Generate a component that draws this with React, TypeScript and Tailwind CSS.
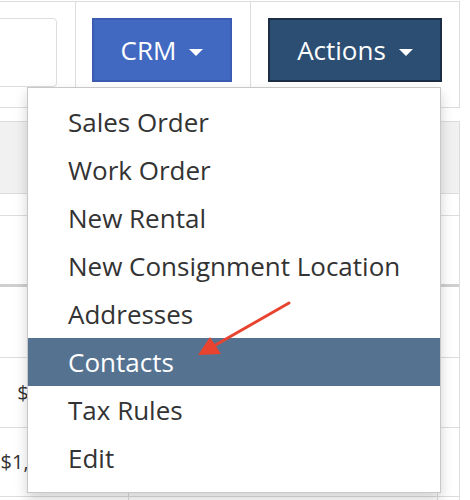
import React from 'react'

const menuItems = [
  'Sales Order',
  'Work Order',
  'New Rental',
  'New Consignment Location',
  'Addresses',
  'Contacts',
  'Tax Rules',
  'Edit',
]

function Caret() {
  return <span className="ml-[13px] mt-[4px] h-0 w-0 border-x-[7px] border-t-[7px] border-x-transparent border-t-white" />
}

function Row({ h, amount, thick }: { h: string; amount?: string; thick?: boolean }) {
  return (
    <div className={`flex ${h} ${thick ? 'border-b-[3px] border-[#cfcfcf]' : 'border-b border-[#dddddd]'}`}>
      <div className="w-[129px] border-r border-[#dddddd] pr-[37px] flex items-center justify-end text-[20px] text-[#333]">
        {amount}
      </div>
      <div className="w-[309px] border-r border-[#dddddd]" />
      <div className="flex-1" />
    </div>
  )
}

export default function App() {
  return (
    <div className="relative w-[470px] h-[500px] overflow-hidden bg-white font-['Open_Sans',sans-serif]">
      {/* toolbar */}
      <div className="mt-px w-[460px] h-[107px] flex border-y border-r border-[#dddddd]">
        <div className="w-[76px] border-r border-[#dddddd] pt-[16px]">
          <div className="-ml-[20px] w-[77px] h-[69px] rounded border border-[#dddddd] bg-white" />
        </div>
        <div className="w-[175px] border-r border-[#dddddd] pt-[16px] pl-[16px]">
          <button className="w-[140px] h-[64px] bg-[#4169c1] border-2 border-[#3a5db3] text-white text-[26px] flex items-center justify-center">
            CRM
            <Caret />
          </button>
        </div>
        <div className="flex-1 pt-[16px] pl-[17px]">
          <button className="w-[174px] h-[64px] bg-[#2c4e72] border-2 border-[#1b2e45] text-white text-[26px] flex items-center justify-center">
            Actions
            <Caret />
          </button>
        </div>
      </div>

      {/* table behind */}
      <div className="mt-[13px] w-[460px] border-t border-r border-[#dddddd]">
        <div className="h-[72px] bg-[#f1f1f1] border-b border-[#dddddd]" />
        <Row h="h-[22px]" />
        <Row h="h-[71px]" thick />
        <Row h="h-[71px]" />
        <Row h="h-[70px]" amount="$234.56" />
        <Row h="h-[69px]" amount="$1,234.56" />
        <Row h="h-[40px]" />
      </div>

      {/* dropdown */}
      <ul className="absolute left-[27px] top-[87px] w-[414px] py-[10px] bg-white border border-[#c8c8c8] shadow-[0_6px_12px_rgba(0,0,0,0.175)]">
        {menuItems.map((item) => (
          <li
            key={item}
            className={`h-[48px] pl-[40px] flex items-center text-[26px] ${
              item === 'Contacts' ? 'bg-[#557391] text-white' : 'text-[#333333]'
            }`}
          >
            {item}
          </li>
        ))}
      </ul>

      {/* annotation arrow */}
      <svg className="absolute inset-0 pointer-events-none" width="470" height="500">
        <line x1="289" y1="303" x2="212" y2="347" stroke="#e8432e" strokeWidth="3" strokeLinecap="round" />
        <polygon points="198,355 210,337 221,354" fill="#e8432e" />
      </svg>
    </div>
  )
}
